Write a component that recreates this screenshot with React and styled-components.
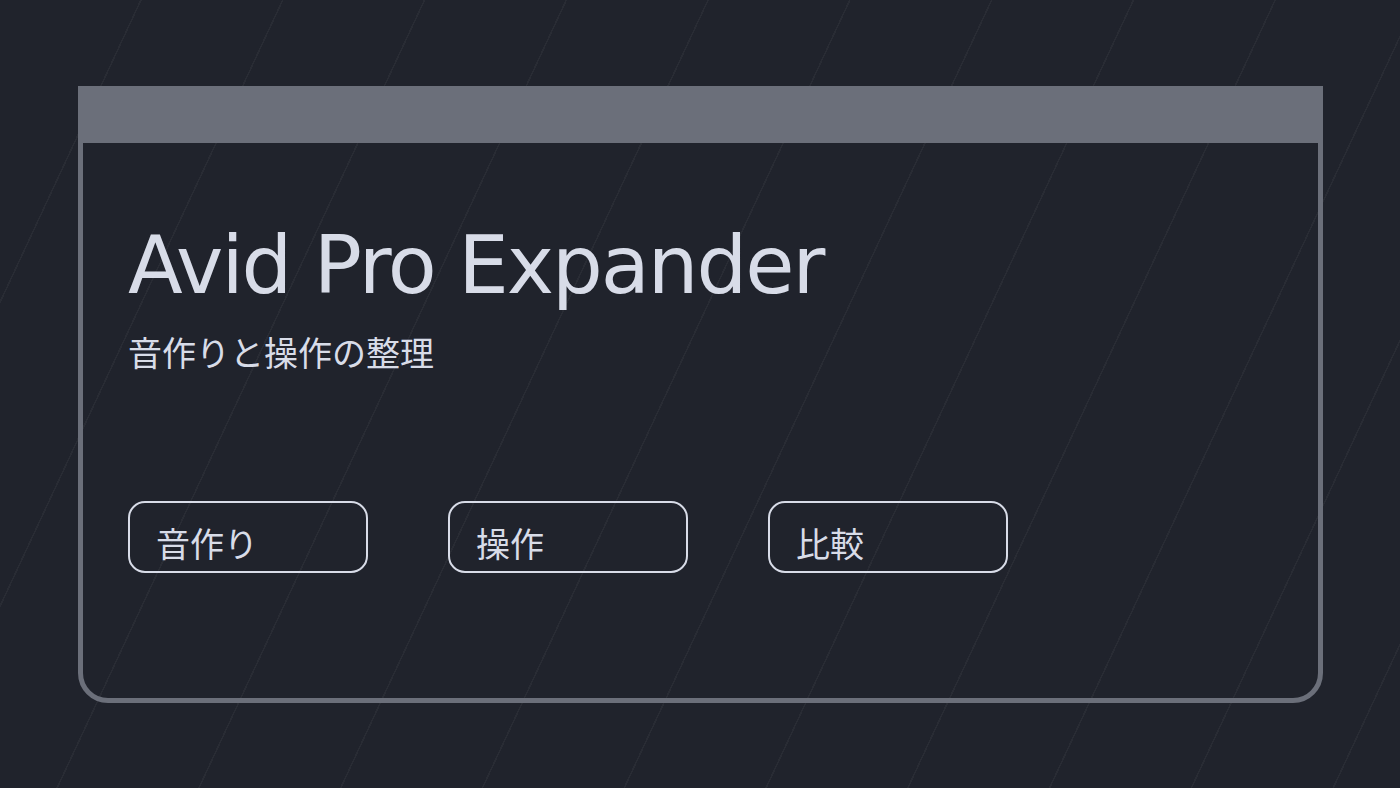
import React from "react";
import styled, { createGlobalStyle } from "styled-components";

const Global = createGlobalStyle`
  html, body { margin: 0; padding: 0; }
  body {
    background-color: #20232c;
    font-family: "Noto Sans CJK JP", "Noto Sans", sans-serif;
    color: #d8dce8;
  }
`;

const Page = styled.div`
  box-sizing: border-box;
  width: 1400px;
  height: 788px;
  padding: 86px 77px 85px 78px;
  background-color: #20232c;
  background-image: repeating-linear-gradient(
    115deg,
    transparent 0px,
    transparent 127px,
    rgba(255, 255, 255, 0.04) 127px,
    rgba(255, 255, 255, 0.04) 128.5px
  );
  display: flex;
`;

const Card = styled.section`
  box-sizing: border-box;
  flex: 1;
  border: 5px solid #6b6f7a;
  border-radius: 0 0 30px 30px;
  display: flex;
  flex-direction: column;
`;

const Header = styled.div`
  height: 52px;
  background: #6b6f7a;
  flex: none;
`;

const Body = styled.div`
  padding: 73px 45px 0 45px;
  display: flex;
  flex-direction: column;
`;

const Title = styled.h1`
  margin: 0;
  font-family: "DejaVu Sans", "Noto Sans CJK JP", sans-serif;
  font-weight: 400;
  font-size: 80px;
  letter-spacing: -2px;
  line-height: 100px;
  color: #d8dce8;
`;

const Subtitle = styled.p`
  margin: 12px 0 0 0;
  font-size: 34px;
  line-height: 48px;
  font-weight: 400;
  color: #d8dce8;
`;

const Actions = styled.div`
  margin-top: 125px;
  display: flex;
  gap: 80px;
`;

const Button = styled.button`
  box-sizing: border-box;
  width: 240px;
  height: 72px;
  border: 2.5px solid #d8dce8;
  border-radius: 17px;
  background: transparent;
  color: #d8dce8;
  font-family: "Noto Sans CJK JP", sans-serif;
  font-size: 34px;
  line-height: 40px;
  padding: 12px 26px 0 26px;
  display: flex;
  align-items: center;
  text-align: left;
  cursor: pointer;
`;

export default function App() {
  return (
    <>
      <Global />
      <Page>
        <Card>
          <Header />
          <Body>
            <Title>Avid Pro Expander</Title>
            <Subtitle>音作りと操作の整理</Subtitle>
            <Actions>
              <Button>音作り</Button>
              <Button>操作</Button>
              <Button>比較</Button>
            </Actions>
          </Body>
        </Card>
      </Page>
    </>
  );
}
